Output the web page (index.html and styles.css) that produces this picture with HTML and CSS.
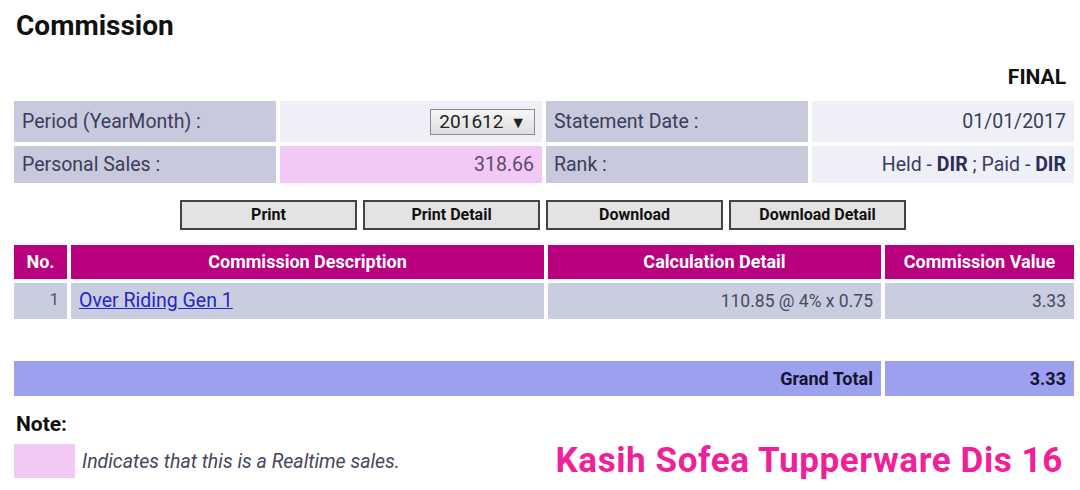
FILE: index.html
```html
<!DOCTYPE html>
<html lang="en">
<head>
    <meta charset="UTF-8">
    <title>Commission</title>
    <link rel="stylesheet" href="styles.css">
</head>
<body>
    <div class="page">
        <h1 class="title">Commission</h1>
        <div class="status">FINAL</div>

        <table class="info">
            <tr class="row-tall">
                <td class="label">Period (YearMonth) :</td>
                <td class="value">
                    <span class="select">201612 <span class="arrow">&#9660;</span></span>
                </td>
                <td class="label">Statement Date :</td>
                <td class="value">01/01/2017</td>
            </tr>
            <tr>
                <td class="label">Personal Sales :</td>
                <td class="value realtime">318.66</td>
                <td class="label">Rank :</td>
                <td class="value">Held - <b>DIR</b> ; Paid - <b>DIR</b></td>
            </tr>
        </table>

        <div class="actions">
            <button class="btn">Print</button>
            <button class="btn">Print Detail</button>
            <button class="btn">Download</button>
            <button class="btn">Download Detail</button>
        </div>

        <table class="commission">
            <colgroup>
                <col class="c-no">
                <col class="c-desc">
                <col class="c-calc">
                <col class="c-val">
            </colgroup>
            <thead>
                <tr>
                    <th>No.</th>
                    <th>Commission Description</th>
                    <th>Calculation Detail</th>
                    <th>Commission Value</th>
                </tr>
            </thead>
            <tbody>
                <tr class="item">
                    <td class="no">1</td>
                    <td class="desc"><a href="#">Over Riding Gen 1</a></td>
                    <td class="num">110.85 @ 4% x 0.75</td>
                    <td class="num">3.33</td>
                </tr>
                <tr class="spacer">
                    <td colspan="4"></td>
                </tr>
                <tr class="total">
                    <td colspan="3">Grand Total</td>
                    <td>3.33</td>
                </tr>
            </tbody>
        </table>

        <div class="note">
            <div class="note-title">Note:</div>
            <div class="legend">
                <span class="swatch"></span>
                <span class="legend-text">Indicates that this is a Realtime sales.</span>
                <span class="brand">Kasih Sofea Tupperware Dis 16</span>
            </div>
        </div>
    </div>
</body>
</html>
```

FILE: styles.css
```css
body {
    margin: 0;
    font-family: Roboto, "Liberation Sans", Arial, sans-serif;
    background-color: #ffffff;
    color: #3b3d5c;
}

.page {
    padding: 0 2px 0 10px;
}

.title {
    margin: 0;
    padding: 9px 0 0 6px;
    font-size: 28px;
    font-weight: bold;
    color: #111111;
    line-height: 34px;
}

.status {
    text-align: right;
    font-size: 21px;
    font-weight: bold;
    color: #111111;
    padding: 22px 12px 0 0;
    line-height: 24px;
}

/* tabla de periodo */
.info {
    width: 100%;
    border-spacing: 4px;
    table-layout: fixed;
    margin-top: 8px;
}

.info td {
    height: 37px;
    padding: 0 8px;
    font-size: 19.5px;
    line-height: 22px;
    color: #3b3d5c;
}

.info .row-tall td {
    height: 41px;
}

.info .label {
    background-color: #c9c9de;
}

.info .value {
    background-color: #eeeff7;
    text-align: right;
}

.info .value b {
    color: #2c2e55;
}

.info .realtime {
    background-color: #f2c8f4;
    color: #5a4a72;
}

.select {
    display: inline-block;
    border: 1px solid #8a8a8a;
    background: linear-gradient(#f6f6f6, #dedede);
    padding: 1px 8px 1px 8px;
    color: #222222;
    font-size: 19px;
    line-height: 21px;
    margin-right: -1px;
}

.select .arrow {
    font-size: 16px;
    margin-left: 2px;
}

/* botones */
.actions {
    display: flex;
    justify-content: center;
    gap: 6px;
    margin-top: 13px;
    padding-right: 2px;
}

.btn {
    width: 177px;
    height: 30px;
    background-color: #e3e3e3;
    border: 2px solid #444444;
    font-family: Roboto, "Liberation Sans", Arial, sans-serif;
    font-size: 16px;
    font-weight: bold;
    color: #111111;
    padding: 0 0 2px 0;
    cursor: pointer;
}

/* tabla de comisiones */
.commission {
    width: 100%;
    border-spacing: 4px;
    table-layout: fixed;
    margin-top: 11px;
}

.c-no { width: 53px; }
.c-calc { width: 333px; }
.c-val { width: 189px; }

.commission th {
    background-color: #b9007f;
    color: #ffffff;
    font-size: 18px;
    line-height: 20px;
    font-weight: bold;
    height: 34px;
    padding: 0;
}

.commission td {
    height: 36px;
    padding: 0 8px;
    font-size: 17.5px;
    line-height: 20px;
    color: #4a4a5a;
}

.commission .item td {
    background-color: #c9cde0;
}

.commission .no {
    vertical-align: top;
    text-align: right;
    font-size: 17px;
    height: 30px;
    padding-top: 6px;
    color: #555566;
}

.commission .desc a {
    color: #2525c8;
    font-size: 19.5px;
}

.commission .num {
    text-align: right;
}

.commission .spacer td {
    height: 34px;
    padding: 0;
    background: none;
}

.commission .total td {
    height: 35px;
    background-color: #9ca0ee;
    text-align: right;
    font-weight: bold;
    font-size: 18px;
    color: #151530;
}

/* nota */
.note {
    padding: 12px 15px 0 4px;
}

.note-title {
    font-size: 21px;
    font-weight: bold;
    color: #111111;
    padding-left: 2px;
    line-height: 24px;
}

.legend {
    display: flex;
    align-items: center;
    gap: 7px;
    margin-top: 7px;
}

.swatch {
    width: 61px;
    height: 34px;
    background-color: #f2c8f4;
}

.legend-text {
    font-style: italic;
    font-size: 19.5px;
    color: #44465a;
}

.brand {
    margin-left: auto;
    font-size: 35px;
    font-weight: bold;
    color: #f0209a;
    letter-spacing: 0.6px;
    line-height: 36px;
}
```
